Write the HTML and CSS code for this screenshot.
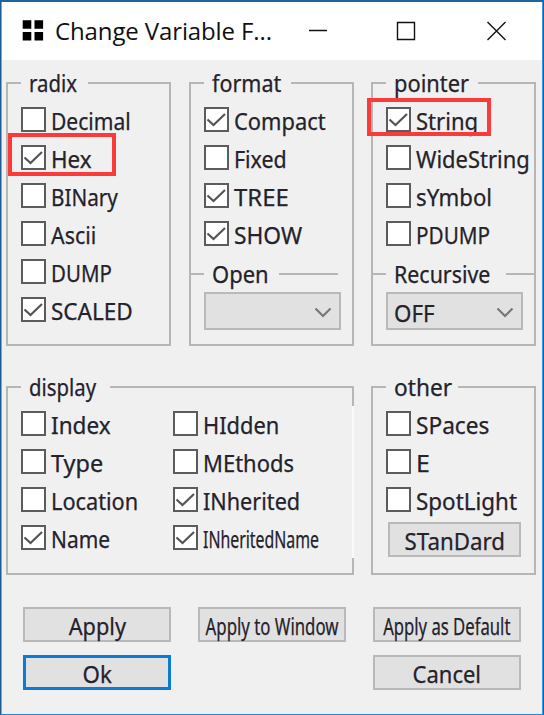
FILE: index.html
```html
<!DOCTYPE html>
<html lang="en">
<head>
<meta charset="utf-8">
<title>Change Variable Format</title>
<link rel="stylesheet" href="styles.css">
</head>
<body>
<div class="window">
  <header class="titlebar">
    <svg class="app-icon" width="22" height="22" viewBox="0 0 22 22"><path d="M.7.3h8.6v8.4H.7zM12.5.3h8.6v8.4h-8.6zM.7 12.1h8.6v8.4H.7zM12.5 12.1h8.6v8.4h-8.6z"/></svg>
    <h1 class="title">Change Variable F...</h1>
    <svg class="controls" width="200" height="24" viewBox="0 0 200 24"><path d="M2 10.500h18M90.500 2.500h17v17h-17zM180.500 2l18 18M198.500 2l-18 18" fill="none" stroke="#111" stroke-width="1.4"/></svg>
  </header>
  <main class="content">
    <fieldset class="group">
      <legend><span class="t" style="--s:.885">radix</span></legend>
      <label class="row"><input type="checkbox"><span class="t" style="--s:.915">Decimal</span></label>
      <label class="row"><input type="checkbox" checked><span class="t" style="--s:.975">Hex</span><i class="mark mark-hex"></i></label>
      <label class="row"><input type="checkbox"><span class="t" style="--s:.9">BINary</span></label>
      <label class="row"><input type="checkbox"><span class="t" style="--s:.93">Ascii</span></label>
      <label class="row"><input type="checkbox"><span class="t" style="--s:.89">DUMP</span></label>
      <label class="row"><input type="checkbox" checked><span class="t" style="--s:.98">SCALED</span></label>
    </fieldset>
    <fieldset class="group">
      <legend><span class="t" style="--s:.935">format</span></legend>
      <label class="row"><input type="checkbox" checked><span class="t" style="--s:.95">Compact</span></label>
      <label class="row"><input type="checkbox"><span class="t" style="--s:.93">Fixed</span></label>
      <label class="row"><input type="checkbox" checked><span class="t" style="--s:1.04">TREE</span></label>
      <label class="row"><input type="checkbox" checked><span class="t" style="--s:.99">SHOW</span></label>
      <div class="divider short"><span class="t" style="--s:.955">Open</span></div>
      <div class="combo"><span></span><svg width="18" height="11" viewBox="0 0 18 11"><path d="M1.500 1.500 9 9l7.500-7.500"/></svg></div>
    </fieldset>
    <fieldset class="group">
      <legend><span class="t" style="--s:.95">pointer</span></legend>
      <label class="row"><input type="checkbox" checked><span class="t" style="--s:.96">String</span><i class="mark mark-string"></i></label>
      <label class="row"><input type="checkbox"><span class="t" style="--s:.955">WideString</span></label>
      <label class="row"><input type="checkbox"><span class="t" style="--s:.965">sYmbol</span></label>
      <label class="row"><input type="checkbox"><span class="t" style="--s:.9">PDUMP</span></label>
      <div class="divider"><span class="t" style="--s:.93">Recursive</span></div>
      <div class="combo"><span class="t" style="--s:.97">OFF</span><svg width="18" height="11" viewBox="0 0 18 11"><path d="M1.500 1.500 9 9l7.500-7.500"/></svg></div>
    </fieldset>
    <fieldset class="group display">
      <legend><span class="t" style="--s:.885">display</span></legend>
      <div class="columns">
        <div>
          <label class="row"><input type="checkbox"><span class="t" style="--s:.98">Index</span></label>
          <label class="row"><input type="checkbox"><span class="t" style="--s:1.02">Type</span></label>
          <label class="row"><input type="checkbox"><span class="t" style="--s:.945">Location</span></label>
          <label class="row"><input type="checkbox" checked><span class="t" style="--s:.91">Name</span></label>
        </div>
        <div>
          <label class="row"><input type="checkbox"><span class="t" style="--s:.95">HIdden</span></label>
          <label class="row"><input type="checkbox"><span class="t" style="--s:.955">MEthods</span></label>
          <label class="row"><input type="checkbox" checked><span class="t" style="--s:.94">INherited</span></label>
          <label class="row"><input type="checkbox" checked><span class="t" style="--s:.69">INheritedName</span></label>
        </div>
      </div>
    </fieldset>
    <fieldset class="group">
      <legend><span class="t" style="--s:.985">other</span></legend>
      <label class="row"><input type="checkbox"><span class="t" style="--s:.985">SPaces</span></label>
      <label class="row"><input type="checkbox"><span class="t" style="--s:1.08">E</span></label>
      <label class="row"><input type="checkbox"><span class="t" style="--s:.975">SpotLight</span></label>
      <button class="btn standard"><span class="t" style="--s:.97">STanDard</span></button>
    </fieldset>
  </main>
  <footer class="actions">
    <button class="btn"><span class="t" style="--s:.945">Apply</span></button>
    <button class="btn"><span class="t" style="--s:.73">Apply to Window</span></button>
    <button class="btn"><span class="t" style="--s:.725">Apply as Default</span></button>
    <button class="btn primary"><span class="t" style="--s:.97">Ok</span></button>
    <button class="btn cancel"><span class="t" style="--s:.955">Cancel</span></button>
  </footer>
</div>
</body>
</html>
```
FILE: styles.css
```css
* { box-sizing: border-box; }

body {
  margin: 0;
  background: #185587;
  font: 23px/28px "Noto Sans", sans-serif;
  color: #24222b;
}

.window {
  width: 544px;
  height: 715px;
  border: 1px solid #1c5c92;
  border-top: 2px solid #1f659c;
  border-right-color: #0867b4;
  border-bottom-color: #2784cf;
  box-shadow: inset 1px 0 #66aee6, inset -1px 0 #3c97de;
  background: #f0f0f0;
  background-clip: padding-box;
}

.titlebar {
  display: flex;
  align-items: flex-start;
  height: 58px;
  margin: 0 1px;
  padding: 18px 0 0 20px;
  background: #fff;
}

.title {
  width: 252px;
  margin: -5px 0 0 11px;
  font: 400 24px/32px "Open Sans", "Noto Sans", sans-serif;
  letter-spacing: -.12px;
  white-space: nowrap;
  color: #111;
}

.t {
  display: inline-block;
  white-space: nowrap;
  transform: scaleX(var(--s, 1));
  transform-origin: 0 50%;
  -webkit-text-stroke: .25px currentColor;
}

.content {
  display: grid;
  grid-template-columns: 165px 165px 165px;
  gap: 28px 17.5px;
  padding: 10px 0 0 5px;
}

.group {
  min-width: 0;
  height: 276px;
  margin: 0;
  padding: 9px 0 0 13px;
  border: 2px solid #b6b6b6;
}

.group legend {
  height: 26px;
  padding: 0 5px 0 8px;
  line-height: 27px;
}

.group.display {
  grid-column: span 2;
  border-right: 0;
  background:
    linear-gradient(#b6b6b6, #b6b6b6) 100% 0 / 2px 20px no-repeat border-box,
    linear-gradient(#b6b6b6, #b6b6b6) 100% 100% / 2px 17px no-repeat border-box,
    linear-gradient(#fafafa, #fafafa) 100% 20px / 2px 153px no-repeat border-box;
}

.group.display,
.group.display + .group { height: 201px; }

.row {
  position: relative;
  display: flex;
  align-items: flex-start;
  height: 38px;
}

.row .t { margin: 2px 0 0 5px; }

input {
  appearance: none;
  flex: none;
  width: 25px;
  height: 25px;
  margin: 2px 0 0;
  border: 2px solid #5c5c5c;
  background: #fff;
}

input:checked {
  background: #fff url("data:image/svg+xml,%3Csvg xmlns='http://www.w3.org/2000/svg' viewBox='0 0 21 21'%3E%3Cpath d='M1.500 10.500l6 5.500L19 5' fill='none' stroke='%23555' stroke-width='2.200'/%3E%3C/svg%3E");
}

.mark {
  position: absolute;
  border: 4px solid #fb3a3a;
}

.mark-hex { left: -13px; top: -10px; width: 108px; height: 43px; }
.mark-string { left: -19px; top: -7px; width: 124px; height: 38px; }

.columns {
  display: grid;
  grid-template-columns: 152px 1fr;
}

.divider {
  display: flex;
  align-items: center;
  gap: 8px;
  height: 33px;
  margin: 0 0 2px -13px;
}

.divider::before,
.divider::after {
  content: "";
  width: 13px;
  height: 2px;
  background: #b6b6b6;
}

.divider::after { flex: 1; }
.divider.short::after { flex: none; width: 59px; }

.combo {
  display: flex;
  align-items: center;
  justify-content: space-between;
  width: 137px;
  height: 38px;
  padding: 3px 7px 0 6px;
  border: 2px solid #b9b9b9;
  background: #e1e1e1;
}

.combo path { fill: none; stroke: #777; stroke-width: 2.2; }

.btn {
  display: flex;
  align-items: center;
  justify-content: center;
  width: 148px;
  height: 35px;
  padding: 2px 0 0;
  border: 2px solid #b9b9b9;
  background: #e1e1e1;
  color: inherit;
  font: inherit;
}

.btn .t { transform-origin: 50% 50%; }
.standard { width: 133px; margin: -1px 0 0 2px; }
.primary { border: 3px solid #0b7bd8; }
.cancel { grid-column: 3; }

.actions {
  display: grid;
  grid-template-columns: repeat(3, 148px);
  gap: 13px 27px;
  padding: 32px 0 0 22px;
}
```
